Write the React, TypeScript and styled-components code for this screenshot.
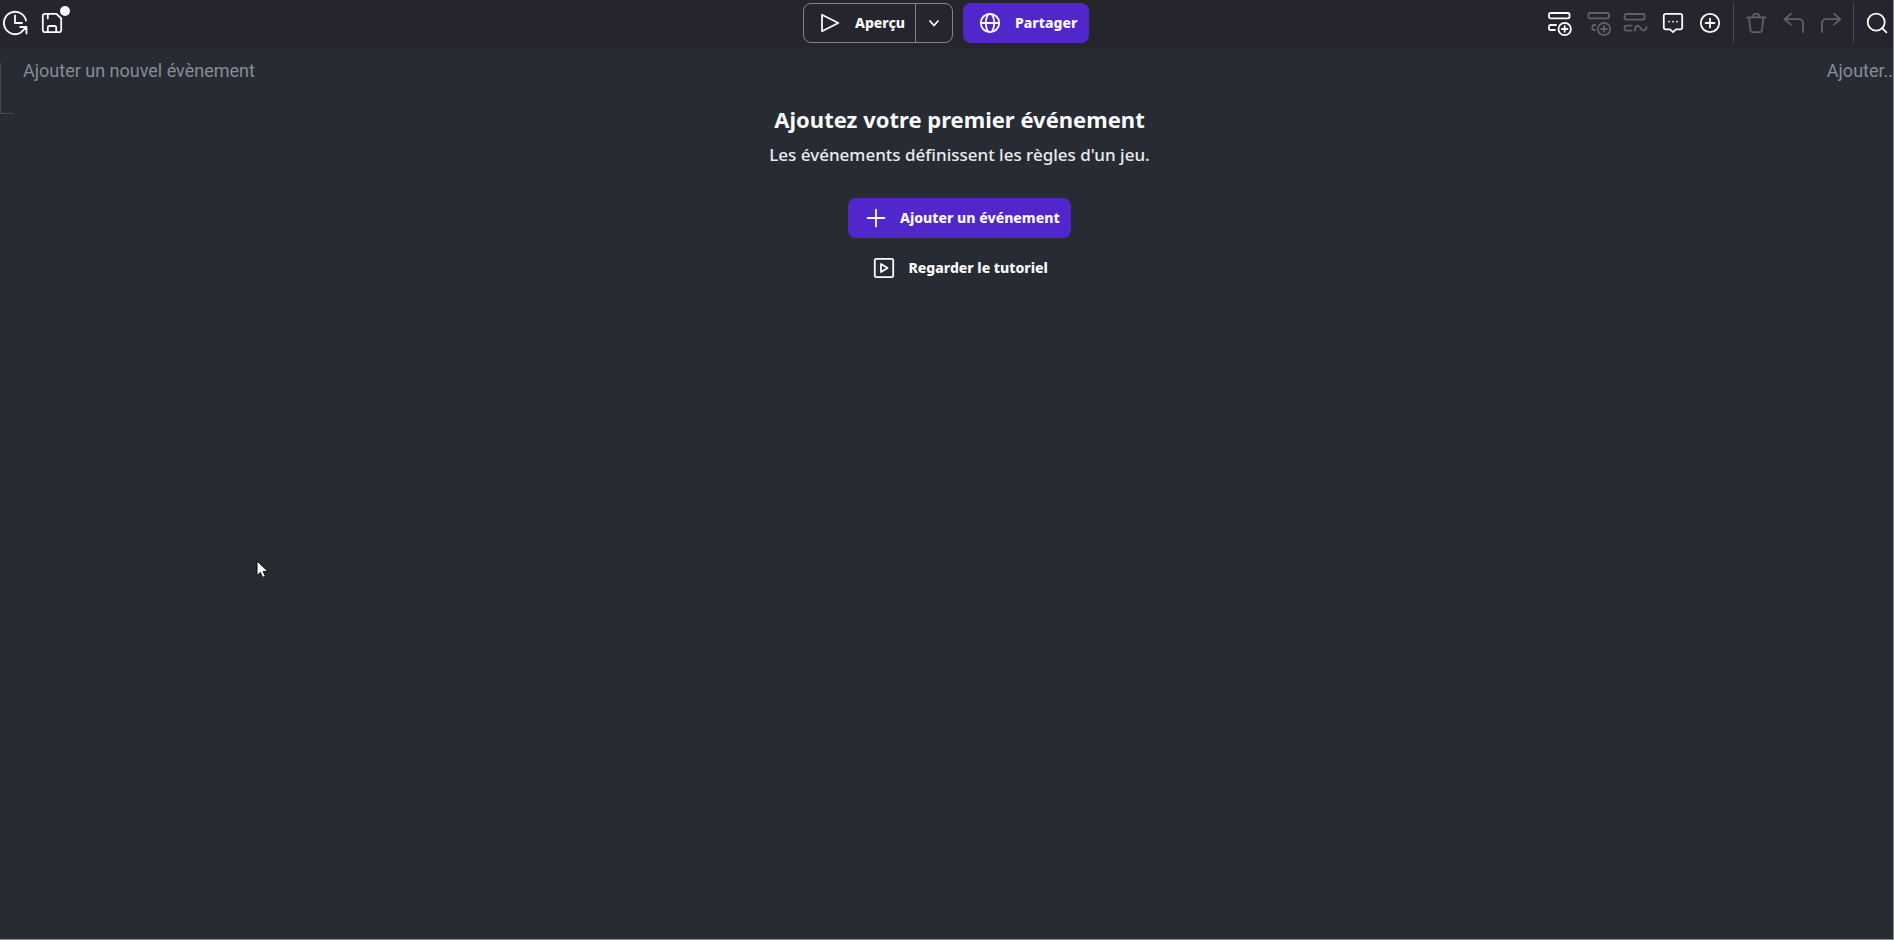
import React from "react";
import styled, { createGlobalStyle } from "styled-components";

const GlobalStyle = createGlobalStyle`
  *, *::before, *::after { box-sizing: border-box; }
  body {
    margin: 0;
    background: #272b34;
    color: #fafafa;
    font-family: "Noto Sans", "Open Sans", sans-serif;
  }
  button { font-family: inherit; color: inherit; margin: 0; }
`;

const Frame = styled.div`
  display: flex;
  flex-direction: column;
  min-height: 100vh;
  overflow: hidden;
  border-right: 1px solid #8b8d92;
  border-bottom: 1px solid #8b8d92;
`;

const Toolbar = styled.header`
  display: grid;
  grid-template-columns: 1fr auto 1fr;
  align-items: center;
  padding: 3px 0 5px;
  background: #25252e;
`;

const ToolGroup = styled.div<{ $end?: boolean }>`
  display: flex;
  align-items: center;
  gap: 3px;
  justify-content: ${(p) => (p.$end ? "flex-end" : "flex-start")};
  margin-left: ${(p) => (p.$end ? "0" : "-2px")};
`;

const ToolButton = styled.button`
  position: relative;
  display: flex;
  align-items: center;
  justify-content: center;
  width: 34px;
  height: 40px;
  padding: 0;
  border: 0;
  background: none;
  color: #fafafa;
  &:disabled { color: #606066; }
`;

const UnsavedDot = styled.span`
  position: absolute;
  top: 3px;
  right: -1px;
  width: 10px;
  height: 10px;
  border-radius: 50%;
  background: #fafafa;
`;

const Divider = styled.span`
  width: 1px;
  height: 40px;
  margin: 0 2px 0 3px;
  background: #494952;
`;

const Glyph = styled.svg`
  display: block;
  flex: none;
  overflow: visible;
  fill: none;
  stroke: currentColor;
  stroke-width: 1.8;
  stroke-linecap: round;
  stroke-linejoin: round;
`;

const MainActions = styled.div`
  display: flex;
  gap: 10px;
  margin-right: 1px;
`;

const SplitButton = styled.div`
  display: flex;
  height: 40px;
  border: 1px solid #84848e;
  border-radius: 8px;
`;

const PreviewButton = styled.button`
  display: flex;
  align-items: center;
  gap: 13px;
  width: 111px;
  padding: 0 0 0 14px;
  border: 0;
  background: none;
  font-size: 14px;
  font-weight: 800;
  line-height: 20px;
`;

const ArrowButton = styled.button`
  display: flex;
  align-items: center;
  justify-content: center;
  width: 37px;
  padding: 0;
  border: 0;
  border-left: 1px solid #84848e;
  background: none;
`;

const ActionButton = styled.button<{ $primary?: boolean; $width: number }>`
  display: flex;
  align-items: center;
  gap: 13px;
  width: ${(p) => p.$width}px;
  height: 40px;
  padding: 0 0 0 15px;
  border: 0;
  border-radius: 8px;
  background: ${(p) => (p.$primary ? "#5126ca" : "none")};
  font-size: 14px;
  font-weight: 800;
  line-height: 20px;
  white-space: nowrap;
`;

const EventRow = styled.div`
  display: flex;
  align-items: flex-start;
  justify-content: space-between;
  margin-top: 15px;
  height: 51px;
`;

const RowHandle = styled.span`
  width: 14px;
  height: 51px;
  border-left: 1px solid #494952;
  border-bottom: 1px solid #494952;
`;

const InlineAdd = styled.button`
  padding: 0;
  margin: -4px auto 0 9px;
  border: 0;
  background: none;
  color: #868c98;
  font-family: Roboto, "Open Sans", sans-serif;
  font-size: 18px;
  line-height: 24px;
  white-space: nowrap;
`;

const InlineAction = styled(InlineAdd)`
  margin: -4px 0 0;
`;

const EmptyState = styled.main`
  display: flex;
  flex-direction: column;
  align-items: center;
  padding-left: 26px;
  margin-top: -11px;
`;

const Title = styled.h1`
  margin: 0;
  font-size: 22px;
  font-weight: 700;
  line-height: 32px;
`;

const Subtitle = styled.p`
  margin: 5px 0 28px;
  color: #ebebed;
  font-size: 17px;
  font-weight: 500;
  line-height: 30px;
`;

const Actions = styled.div`
  display: flex;
  flex-direction: column;
  align-items: center;
  gap: 10px;
`;

const Pointer = styled.svg`
  position: absolute;
  left: 256px;
  top: 560px;
`;

const Icon = ({ children }: { children: React.ReactNode }) => (
  <Glyph width="24" height="24" viewBox="0 0 24 24" aria-hidden="true">
    {children}
  </Glyph>
);

export default function App() {
  return (
    <>
      <GlobalStyle />
      <Frame>
        <Toolbar>
          <ToolGroup>
            <ToolButton aria-label="Historique">
              <Icon>
                <path d="M23 9.5A11.2 11.2 0 1 0 17.5 21.8M12 4.5V12H19M17.2 16H23.5V22.5M23.5 16L18 21.4" />
              </Icon>
            </ToolButton>
            <ToolButton aria-label="Enregistrer">
              <Icon>
                <path d="M5 2.8H16.5L21.2 7.5V19A2.2 2.2 0 0 1 19 21.2H5A2.2 2.2 0 0 1 2.8 19V5A2.2 2.2 0 0 1 5 2.8ZM7.8 3V7.5M7.8 21V16.5A1.5 1.5 0 0 1 9.3 15H14.7A1.5 1.5 0 0 1 16.2 16.5V21" />
              </Icon>
              <UnsavedDot />
            </ToolButton>
          </ToolGroup>
          <MainActions>
            <SplitButton>
              <PreviewButton>
                <Icon>
                  <path d="M4 3.8V20.2L20.3 12Z" />
                </Icon>
                Aperçu
              </PreviewButton>
              <ArrowButton aria-label="Options d'aperçu">
                <Icon>
                  <path d="M8 10L12 14.5L16 10" />
                </Icon>
              </ArrowButton>
            </SplitButton>
            <ActionButton $primary $width={126}>
              <Icon>
                <circle cx="12" cy="12" r="9.2" />
                <ellipse cx="12" cy="12" rx="4.2" ry="9.2" />
                <path d="M2.8 12H21.2" />
              </Icon>
              Partager
            </ActionButton>
          </MainActions>
          <ToolGroup $end>
            <ToolButton aria-label="Ajouter un évènement">
              <Icon>
                <rect x="-1" y="2" width="20.5" height="5.4" rx="1.6" />
                <path d="M6 14H.6A1.6 1.6 0 0 0-1 15.6V17.4A1.6 1.6 0 0 0 .6 19H5" />
                <circle cx="14.7" cy="18" r="6.2" />
                <path d="M14.7 15.2V20.8M11.9 18H17.5" />
              </Icon>
            </ToolButton>
            <ToolButton aria-label="Ajouter un sous-évènement" disabled>
              <Icon>
                <rect x="1.4" y="2" width="20.5" height="5.4" rx="1.6" />
                <path d="M8.5 14H7A1.6 1.6 0 0 0 5.4 15.6V17.4A1.6 1.6 0 0 0 7 19H8" />
                <circle cx="17" cy="18" r="6.2" />
                <path d="M17 15.2V20.8M14.2 18H19.8" />
              </Icon>
            </ToolButton>
            <ToolButton aria-label="Ajouter une variable locale" disabled>
              <Icon>
                <rect x=".6" y="3" width="20" height="5.6" rx="1.6" />
                <path d="M7.6 14.6H2.2A1.6 1.6 0 0 0 .6 16.2V18A1.6 1.6 0 0 0 2.2 19.6H7.6M11 19.6C11.2 13.8 14.4 13.6 16.5 17S21.8 20.4 22.6 16.2" />
              </Icon>
            </ToolButton>
            <ToolButton aria-label="Ajouter un commentaire">
              <Icon>
                <path d="M4.6 2.8H19.4A1.8 1.8 0 0 1 21.2 4.6V16.6A1.8 1.8 0 0 1 19.4 18.4H15L12 21.2L9 18.4H4.6A1.8 1.8 0 0 1 2.8 16.6V4.6A1.8 1.8 0 0 1 4.6 2.8Z" />
                <path d="M8 10.6H8.1M12 10.6H12.1M16 10.6H16.1" />
              </Icon>
            </ToolButton>
            <ToolButton aria-label="Ajouter">
              <Icon>
                <circle cx="12" cy="12" r="9.2" />
                <path d="M12 7.6V16.4M7.6 12H16.4" />
              </Icon>
            </ToolButton>
            <Divider />
            <ToolButton aria-label="Supprimer" disabled>
              <Icon>
                <path d="M3 6.4H21.4M5 6.4L6.5 19.5A1.9 1.9 0 0 0 8.4 21.2H16A1.9 1.9 0 0 0 17.9 19.5L19.4 6.4M9.2 6.2V5A2.2 2.2 0 0 1 11.4 2.8H13A2.2 2.2 0 0 1 15.2 5V6.2" />
              </Icon>
            </ToolButton>
            <ToolButton aria-label="Annuler" disabled>
              <Icon>
                <path d="M10 2.8L3.6 8.2L10 13.6M3.8 8.2H18A4 4 0 0 1 22 12.2V21" />
              </Icon>
            </ToolButton>
            <ToolButton aria-label="Rétablir" disabled>
              <Icon>
                <path d="M16 2.8L22.4 8.2L16 13.6M22.2 8.2H8A4 4 0 0 0 4 12.2V21" />
              </Icon>
            </ToolButton>
            <Divider />
            <ToolButton aria-label="Rechercher">
              <Icon>
                <circle cx="12.2" cy="11.2" r="8.5" />
                <path d="M18.2 17.2L22.4 21.3" />
              </Icon>
            </ToolButton>
          </ToolGroup>
        </Toolbar>
        <EventRow>
          <RowHandle />
          <InlineAdd>Ajouter un nouvel évènement</InlineAdd>
          <InlineAction>Ajouter..</InlineAction>
        </EventRow>
        <EmptyState>
          <Title>Ajoutez votre premier événement</Title>
          <Subtitle>Les événements définissent les règles d'un jeu.</Subtitle>
          <Actions>
            <ActionButton $primary $width={223}>
              <Icon>
                <path d="M13 3.6V20.4M4.6 12H21.4" />
              </Icon>
              Ajouter un événement
            </ActionButton>
            <ActionButton $width={206}>
              <Icon>
                <rect x="2.8" y="2.8" width="18.4" height="18.4" rx="1.6" />
                <path d="M9 8V16L15.6 12Z" />
              </Icon>
              Regarder le tutoriel
            </ActionButton>
          </Actions>
        </EmptyState>
        <Pointer width="14" height="20" viewBox="0 0 14 20" aria-hidden="true">
          <path d="M1 1V15.5L4.4 12.4L6.6 17.4L9.4 16.2L7.2 11.4H12Z" fill="#fff" stroke="#0b0b0e" strokeWidth="1" />
        </Pointer>
      </Frame>
    </>
  );
}
